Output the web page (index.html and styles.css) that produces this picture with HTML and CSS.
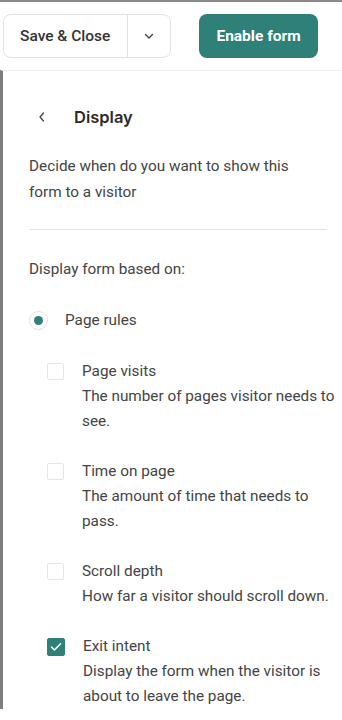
FILE: index.html
```html
<!DOCTYPE html>
<html lang="en">
<head>
    <meta charset="UTF-8">
    <meta name="viewport" content="width=device-width, initial-scale=1.0">
    <title>Display settings</title>
    <link rel="stylesheet" href="styles.css">
</head>
<body>
    <!-- Top toolbar -->
    <div class="toolbar">
        <div class="btn-group">
            <button class="btn-save">Save &amp; Close</button>
            <button class="btn-more">
                <svg width="12" height="12" viewBox="0 0 12 12"><path d="M2.5 4.5 6 8l3.5-3.5" fill="none" stroke="#444" stroke-width="1.4" stroke-linecap="round" stroke-linejoin="round"/></svg>
            </button>
        </div>
        <button class="btn-enable">Enable form</button>
    </div>

    <!-- Display panel -->
    <div class="panel">
        <div class="panel-head">
            <span class="back">
                <svg width="10" height="12" viewBox="0 0 10 12"><path d="M6.5 2 3 6l3.5 4" fill="none" stroke="#444" stroke-width="1.3" stroke-linecap="round" stroke-linejoin="round"/></svg>
            </span>
            <h2>Display</h2>
        </div>
        <p class="intro">Decide when do you want to show this form to a visitor</p>
        <hr class="divider">

        <p class="label">Display form based on:</p>

        <div class="radio-row">
            <span class="radio"><span class="dot"></span></span>
            <span>Page rules</span>
        </div>

        <div class="rules">
            <div class="rule">
                <span class="check"></span>
                <div>
                    <div class="rule-title">Page visits</div>
                    <div>The number of pages visitor needs to see.</div>
                </div>
            </div>
            <div class="rule">
                <span class="check"></span>
                <div>
                    <div class="rule-title">Time on page</div>
                    <div>The amount of time that needs to pass.</div>
                </div>
            </div>
            <div class="rule">
                <span class="check"></span>
                <div>
                    <div class="rule-title">Scroll depth</div>
                    <div>How far a visitor should scroll down.</div>
                </div>
            </div>
            <div class="rule">
                <span class="check checked">
                    <svg width="12" height="10" viewBox="0 0 12 10"><path d="M1.5 5 4.5 8 10.5 1.8" fill="none" stroke="#fff" stroke-width="1.5" stroke-linecap="round" stroke-linejoin="round"/></svg>
                </span>
                <div>
                    <div class="rule-title">Exit intent</div>
                    <div>Display the form when the visitor is about to leave the page.</div>
                </div>
            </div>
        </div>
    </div>
</body>
</html>
```

FILE: styles.css
```css
body{
    margin: 0;
    font-family: Roboto, "Liberation Sans", sans-serif;
    color: #444;
    background-color: #fff;
    border-top: 2px solid #8a8a8a;
    overflow: hidden;
}

/* Toolbar */
.toolbar{
    display: flex;
    align-items: center;
    padding: 12px 0 12px 3px;
    gap: 28px;
}
.btn-group{
    display: flex;
    height: 44px;
    border: 1px solid #e2e2e2;
    border-radius: 8px;
    box-sizing: border-box;
    width: 168px;
}
.btn-group button{
    background: none;
    border: none;
    font-family: inherit;
    cursor: pointer;
}
.btn-save{
    font-size: 15.5px;
    font-weight: 500;
    color: #333;
    padding: 0 16px;
    width: 124px;
    text-align: left;
    border-right: 1px solid #e2e2e2 !important;
}
.btn-more{
    flex: 1;
    display: flex;
    align-items: center;
    justify-content: center;
}
.btn-enable{
    height: 44px;
    width: 119px;
    border: none;
    border-radius: 8px;
    background-color: #2e8079;
    color: #fff;
    font-family: inherit;
    font-size: 15.5px;
    font-weight: 700;
    cursor: pointer;
}

/* Panel */
.panel{
    border-top: 1px solid #ececec;
    border-left: 3px solid #7d7d7d;
    padding: 22px 15px 0 26px;
    font-size: 15.3px;
    line-height: 25px;
}
.panel-head{
    display: flex;
    align-items: center;
    height: 48px;
}
.back{
    display: flex;
    width: 37px;
    padding-left: 8px;
}
.panel-head h2{
    margin: 0;
    font-family: Inter, sans-serif;
    font-size: 16.5px;
    font-weight: 600;
    color: #2b2b2b;
}
.intro{
    margin: 12px 0 0;
    padding-right: 10px;
    line-height: 26px;
}
.divider{
    border: none;
    border-top: 1px solid #e4e4e4;
    margin: 24px 0 0;
}
.label{
    margin: 27px 0 0;
}

.radio-row{
    display: flex;
    align-items: center;
    gap: 17px;
    margin-top: 26px;
}
.radio{
    width: 17px;
    height: 17px;
    border: 1px solid #e2e2e2;
    border-radius: 50%;
    display: flex;
    align-items: center;
    justify-content: center;
}
.dot{
    width: 9px;
    height: 9px;
    border-radius: 50%;
    background-color: #2e8079;
}

.rules{
    padding-left: 18px;
    margin-top: 26px;
    margin-right: -13px;
}
.rule{
    display: flex;
    gap: 18px;
    margin-bottom: 25px;
}
.rule-title{
    color: #444;
}
.check{
    flex: none;
    width: 17px;
    height: 17px;
    margin-top: 4px;
    border: 1px solid #e6e6e6;
    border-radius: 2px;
    box-sizing: border-box;
    display: flex;
    align-items: center;
    justify-content: center;
}
.check.checked{
    background-color: #2e8079;
    border-color: #2e8079;
    width: 18px;
    height: 18px;
}
```
